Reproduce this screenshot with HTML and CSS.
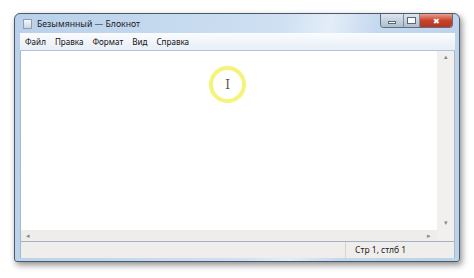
FILE: index.html
```html
<!DOCTYPE html>
<html>
  <head>
    <title>Безымянный — Блокнот</title>
    <meta charset="UTF-8">
    <link rel="stylesheet" href="styles.css">
  </head>
  <body>
    <div class="page">
      <div class="window">
        <div class="titlebar">
          <span class="appicon"></span>
          <span class="title">Безымянный — Блокнот</span>
          <div class="buttons">
            <span class="btn btn-min"><span class="dash"></span></span>
            <span class="btn btn-max"><span class="box"></span></span>
            <span class="btn btn-close">&#x2716;</span>
          </div>
        </div>
        <div class="menubar">
          <span class="menu">Файл</span>
          <span class="menu">Правка</span>
          <span class="menu">Формат</span>
          <span class="menu">Вид</span>
          <span class="menu">Справка</span>
        </div>
        <div class="editor">
          <div class="text">
            <div class="cursor"><span class="ibeam">I</span></div>
          </div>
          <div class="vscroll">
            <span class="arrow">&#9652;</span>
            <span class="arrow">&#9662;</span>
          </div>
        </div>
        <div class="hscroll">
          <span class="arrow">&#9666;</span>
          <span class="arrow">&#9656;</span>
          <span class="corner"></span>
        </div>
        <div class="statusbar">
          <span class="status-left"></span>
          <span class="status-right">Стр 1, стлб 1</span>
        </div>
      </div>
    </div>
  </body>
</html>
```
FILE: styles.css
```css
*{
  box-sizing: border-box;
}

body{
  margin: 0;
  background: #fff;
  font-family: "Noto Sans", sans-serif;
}

.page{
  padding: 13px 14px 16px 14px;
}

.window{
  height: 249px;
  display: flex;
  flex-direction: column;
  border: 1px solid #4c5966;
  border-radius: 6px 6px 3px 3px;
  background: linear-gradient(100deg, #b8d0ea 0%, #cfe0f2 55%, #e3edf8 65%, #c4d8ee 75%, #bcd2ea 100%);
  box-shadow: 2px 3px 6px rgba(0,0,0,.45);
  padding: 0 4px 3px 5px;
}

.titlebar{
  height: 19px;
  display: flex;
  align-items: center;
}

.appicon{
  width: 9px;
  height: 10px;
  margin: 1px 5px 0 3px;
  background: linear-gradient(#f4f8fc, #c9d6e3);
  border: 1px solid #8e9eae;
}

.title{
  font-size: 8.7px;
  color: #1b1b1b;
  margin-top: 1px;
}

.buttons{
  margin-left: auto;
  margin-right: 2px;
  align-self: flex-start;
  display: flex;
  height: 14px;
  border: 1px solid #5d6f80;
  border-top: none;
  border-radius: 0 0 4px 4px;
  overflow: hidden;
}

.btn{
  display: flex;
  align-items: center;
  justify-content: center;
  background: linear-gradient(#dde6ef, #aebdcc);
  border-right: 1px solid #7d8d9c;
}

.btn-min{
  width: 23px;
}

.btn-max{
  width: 16px;
}

.btn-close{
  width: 32px;
  border-right: none;
  background: linear-gradient(#e8a190, #c8432c 50%, #b83420);
  color: #fff;
  font-size: 8px;
}

.dash{
  width: 8px;
  height: 3px;
  background: #fff;
  border: 1px solid #56687a;
  margin-top: 4px;
}

.box{
  width: 9px;
  height: 7px;
  border: 1px solid #56687a;
  background: #fff;
}

.menubar{
  height: 18px;
  display: flex;
  align-items: center;
  gap: 9px;
  padding-left: 5px;
  background: linear-gradient(#fbfcfe, #e7eef7);
  border-bottom: 1px solid #b6c4d3;
}

.menu{
  font-size: 8.1px;
  color: #111;
}

.editor{
  flex: 1;
  display: flex;
  background: #fff;
  border-left: 1px solid #a9b7c6;
  border-right: 1px solid #a9b7c6;
}

.text{
  flex: 1;
  position: relative;
}

.cursor{
  position: absolute;
  left: 188px;
  top: 15px;
  width: 37px;
  height: 37px;
  border-radius: 50%;
  border: 4px solid #f4f37e;
  box-shadow: 0 0 2px #fafac0;
  display: flex;
  align-items: center;
  justify-content: center;
}

.ibeam{
  font-family: "DejaVu Serif", serif;
  font-size: 12px;
  color: #555;
}

.vscroll{
  width: 17px;
  background: #f2f0ef;
  display: flex;
  flex-direction: column;
  justify-content: space-between;
  align-items: center;
  padding: 2px 0 3px;
}

.arrow{
  font-size: 7px;
  color: #8a8a8a;
  line-height: 8px;
}

.hscroll{
  height: 12px;
  display: flex;
  align-items: center;
  background: #efedec;
  border-left: 1px solid #a9b7c6;
  border-right: 1px solid #a9b7c6;
  border-bottom: 1px solid #a6b2bd;
  padding-left: 5px;
}

.hscroll .arrow:nth-child(2){
  margin-left: auto;
  margin-right: 6px;
}

.corner{
  width: 17px;
  height: 100%;
  background: #f2f0ef;
}

.statusbar{
  height: 16px;
  display: flex;
  background: #f0eeec;
  border-left: 1px solid #a9b7c6;
  border-right: 1px solid #a9b7c6;
}

.status-left{
  width: 325px;
  border-right: 1px solid #d6d3d0;
}

.status-right{
  font-size: 8.5px;
  color: #222;
  padding-left: 9px;
  line-height: 15px;
}
```
